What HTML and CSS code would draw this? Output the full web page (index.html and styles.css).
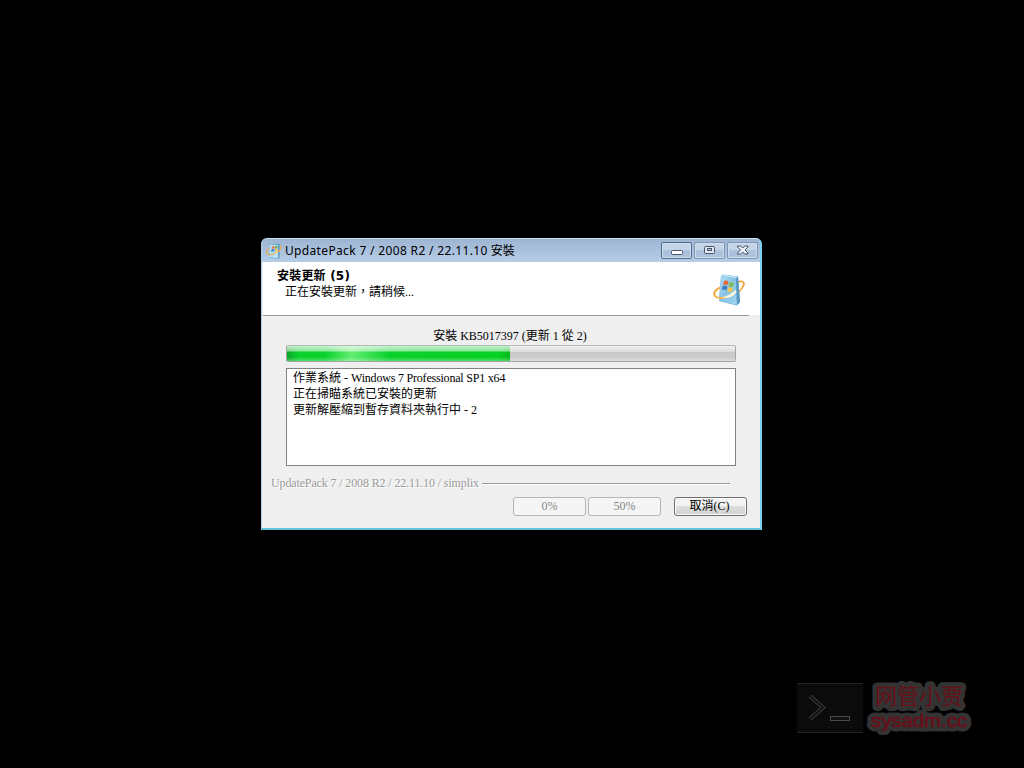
FILE: index.html
```html
<!DOCTYPE html>
<html lang="zh-Hant">
<head>
<meta charset="utf-8">
<title>UpdatePack 7</title>
<link rel="stylesheet" href="styles.css">
</head>
<body>
<svg class="defs" width="0" height="0">
  <defs>
    <linearGradient id="box" x1="0" y1="0" x2="1" y2="1"><stop offset="0" stop-color="#b4dff2"/><stop offset=".5" stop-color="#86c3e5"/><stop offset="1" stop-color="#9fd6f2"/></linearGradient>
    <linearGradient id="ring" x1="0" y1="0" x2="1" y2="0"><stop offset="0" stop-color="#f2a73b"/><stop offset=".4" stop-color="#f5b85a"/><stop offset=".7" stop-color="#fff0cf"/><stop offset="1" stop-color="#fff6e4"/></linearGradient>
    <symbol id="pack" viewBox="0 0 32 32">
      <path d="M25 8C29 6.500 32 8 30.500 11.500C29.500 14 28 16 25.500 18" fill="none" stroke="#f2a43a" stroke-width="1.700"/>
      <path d="M8 2L10 0.500L25 2.500L27 28L24 31.500L6 27Z" fill="#5d9fc8"/>
      <path d="M8 2L10 0.500L25 2.500L23 4.500Z" fill="#b9e2f3"/>
      <path d="M8 2L23 4.500L24 31L6 27Z" fill="url(#box)"/>
      <path d="M23 4.500L25 2.500L27 28L24 31Z" fill="#5a99c4"/>
      <path d="M11 7Q13.500 6 15.500 7.500L14.500 11.500Q12.500 10 10 11Z" fill="#e8663b"/>
      <path d="M16.500 8Q18.500 9.500 21 8.500L20 12.500Q18 13.500 15.500 12Z" fill="#84b84a"/>
      <path d="M9.700 12Q12 11 14.200 12.500L13.500 16.500Q11.500 15 8.700 16Z" fill="#397dc3"/>
      <path d="M15.300 13Q17.500 14.500 19.800 13.500L19 17.500Q17 18.500 14.300 17Z" fill="#f6c54a"/>
      <path d="M7 13.500C2 16 0 19.500 2 22C5 26 17 23.500 23 17" fill="none" stroke="url(#ring)" stroke-width="2"/>
      <path d="M9 23.500Q17 22 22.500 16Q23.500 20 18.500 22.500Q14 24.500 9 23.500Z" fill="#fff6df"/>
    </symbol>
    <symbol id="pack-small" viewBox="0 0 16 16">
      <path d="M4 1.500L12 0.500L14 1.500L13.500 15L12 16L3.500 14.500Z" fill="#5b9fce"/>
      <path d="M4 1.500L12 2L12 15.500L3.500 14Z" fill="#b5e2f5"/>
      <path d="M6 3.500L8.500 3V5.500L5.500 6Z" fill="#e9754c"/>
      <path d="M9 3H11.500V5.500H9Z" fill="#79b055"/>
      <path d="M5.500 6.500L8.500 6V8.500H5Z" fill="#3f86c8"/>
      <path d="M9 6H11.500V8.500H9Z" fill="#f0c34f"/>
      <path d="M3 5.500C0 7.500 0 11 3 11.500C7 12 11 10 13 8C16 5 16 2.500 13.500 3.500" fill="none" stroke="#e5ad5b" stroke-width="1.300"/>
      <path d="M6 11.700Q10 11 12 8.500Q12 11.500 6 11.700Z" fill="#fff4d9"/>
    </symbol>
  </defs>
</svg>
<main class="window">
  <header class="titlebar">
    <svg class="app-icon"><use href="#pack-small"/></svg>
    <h1 class="title"><span class="title-latin">UpdatePack 7 / 2008 R2 / 22.11.10</span> 安裝</h1>
    <div class="controls">
      <span class="control active"><svg width="30" height="15"><rect x="9.500" y="7.500" width="11" height="4" rx="1" fill="#fff" stroke="#4b5563"/></svg></span>
      <span class="control"><svg width="30" height="15"><rect x="9.500" y="3.500" width="10" height="7" rx="1" fill="#dbe6f2" stroke="#4b5563"/><rect x="12.500" y="5.500" width="4" height="2" fill="#b4c9e0" stroke="#4b5563"/></svg></span>
      <span class="control"><svg width="30" height="15"><path d="M9.500 3H12.700L14.700 5L16.700 3H20V4L17 7L20 10V11H16.700L14.700 9L12.700 11H9.500V10L12.500 7L9.500 4Z" fill="#e8eef5" stroke="#4f5967"/></svg></span>
    </div>
  </header>
  <section class="heading">
    <div class="heading-text"><h2>安裝更新 (5)</h2><p>正在安裝更新，請稍候...</p></div>
    <svg class="pack-icon"><use href="#pack"/></svg>
  </section>
  <section class="content">
    <p class="status"><span>安裝 KB5017397 (更新 1 從 2)</span></p>
    <div class="progress"><div class="bar"></div></div>
    <div class="log"><p>作業系統 - <span class="log-latin">Windows 7 Professional SP1 x64</span></p><p>正在掃瞄系統已安裝的更新</p><p>更新解壓縮到暫存資料夾執行中 - 2</p></div>
    <div class="brand"><span>UpdatePack 7 / 2008 R2 / 22.11.10 / simplix</span><i></i></div>
    <footer class="buttons"><button disabled>0%</button><button disabled>50%</button><button class="cancel">取消(C)</button></footer>
  </section>
</main>
<aside class="watermark">
  <svg width="180" height="56">
    <rect x="1" y="4" width="66" height="49" fill="#0b0b0b"/>
    <path d="M1 4.500H67M1 53.500H67" stroke="#252525"/>
    <path d="M14 17L27 28.500L14 40" fill="none" stroke="#3b3b3b" stroke-width="4"/>
    <path d="M14 17L27 28.500L14 40" fill="none" stroke="#111" stroke-width="2"/>
    <rect x="34.500" y="37.500" width="19" height="4" fill="#111" stroke="#484848"/>
    <g class="halo"><text class="wm-cn" x="79" y="25" textLength="88">网管小贾</text><text class="wm-latin" x="75" y="48" textLength="96" lengthAdjust="spacingAndGlyphs">sysadm.cc</text></g>
    <g class="ink"><text class="wm-cn" x="79" y="25" textLength="88">网管小贾</text><text class="wm-latin" x="75" y="48" textLength="96" lengthAdjust="spacingAndGlyphs">sysadm.cc</text></g>
  </svg>
</aside>
</body>
</html>
```
FILE: styles.css
```css
* { box-sizing: border-box; }
body { margin: 0; width: 1024px; height: 768px; overflow: hidden; background: #000; color: #000; font-family: "Liberation Serif", "Noto Sans CJK TC", serif; font-size: 12px; }
h1, h2, p { margin: 0; font-weight: normal; }
.defs { position: absolute; }
.window { width: 501px; height: 292px; margin: 238px 0 0 261px; display: flex; flex-direction: column; border: 1px solid #a9cce8; border-right: 2px solid #7bd0f2; border-bottom: 2px solid #62c5dc; border-top-color: #c9e2f2; border-radius: 6px 6px 0 0; overflow: hidden; background: #efefef; }
.titlebar { height: 23px; flex: none; display: flex; align-items: center; padding: 0 2px 0 4px; background: linear-gradient(#9db5d2, #b6cde7); }
.app-icon { width: 16px; height: 16px; margin-right: 3px; }
.title { flex: 1; font: 12px/23px "Noto Sans", "Noto Sans CJK TC", sans-serif; padding-bottom: 1px; white-space: nowrap; }
.title-latin { letter-spacing: 0.340px; }
.controls { display: flex; gap: 2px; }
.control { width: 31px; height: 17px; border: 1px solid #8196b2; border-radius: 2px; background: linear-gradient(#c4d5e8 50%, #abc1dc 50%); box-shadow: inset 0 0 0 1px #cfdeee; }
.control.active { border-color: #546b8b; }
.control svg { display: block; }
.heading { height: 54px; flex: none; display: flex; justify-content: space-between; margin-left: 1px; background: linear-gradient(90deg, #999 486px, #efefef 486px) bottom / 100% 1px no-repeat #fff; }
.heading-text { padding: 6px 0 0 14px; line-height: 16px; }
.heading h2 { font: bold 12px/16px "DejaVu Sans", "Noto Sans CJK TC", sans-serif; letter-spacing: 0.200px; }
.heading p { padding-left: 8px; }
.pack-icon { width: 32px; height: 32px; margin: 12px 15px 0 0; }
.content { padding: 12px 13px 0 9px; }
.status { height: 17px; line-height: 16px; text-align: center; padding-left: 2px; }
.progress { width: 450px; height: 17px; margin-left: 15px; border: 1px solid #a4a4a4; border-top-color: #b8b8b8; border-radius: 2px; background: linear-gradient(#f0f0f0, #dedede 36%, #c8c8c8 42%, #cbcbcb 75%, #dedede); }
.bar { width: 223px; height: 15px; background: linear-gradient(rgba(255,255,255,.75), rgba(255,255,255,.5) 34%, transparent 40%, transparent 75%, rgba(255,255,255,.3)), linear-gradient(90deg, #0aa62a, #0bd12d 5%, #0bd12d 17%, #63ee71 29%, #0bd12d 46%, #07d023 95%, #05b91e); }
.log { width: 450px; height: 98px; margin: 6px 0 0 15px; padding: 1px 6px; border: 1px solid #828282; background: #fff; line-height: 16px; white-space: nowrap; }
.log-latin { letter-spacing: -0.200px; }
.brand { display: flex; align-items: center; gap: 3px; margin-top: 8px; height: 18px; width: 459px; color: #9b9b9b; text-shadow: 1px 1px #fff; line-height: 18px; white-space: nowrap; }
.brand span { letter-spacing: -0.130px; }
.brand i { flex: 1; height: 2px; border-top: 1px solid #999; background: #fff; margin-top: 2px; }
.buttons { display: flex; justify-content: flex-end; gap: 2px; margin-top: 5px; }
button { width: 73px; height: 19px; padding: 0; border: 1px solid #b2b6b8; border-radius: 3px; background: #f5f5f5; color: #858585; font: 12px/15px "Liberation Serif", "Noto Sans CJK TC", serif; }
.cancel { margin-left: 11px; padding-right: 2px; border-color: #707070; background: linear-gradient(#f3f3f3 48%, #dedede 50%, #d1d1d1); box-shadow: inset 0 0 0 1px #fafafa; color: #000; }
.watermark { position: absolute; left: 796px; top: 679px; }
.watermark svg { display: block; }
.halo { fill: #333; stroke: #333; stroke-width: 9px; stroke-linejoin: round; }
.ink { fill: #681018; }
.wm-cn { font: 22px "Noto Sans CJK SC", sans-serif; }
.wm-latin { font: 19px "Liberation Sans", sans-serif; }
.ink .wm-latin { stroke: #681018; stroke-width: 0.600px; }
```
